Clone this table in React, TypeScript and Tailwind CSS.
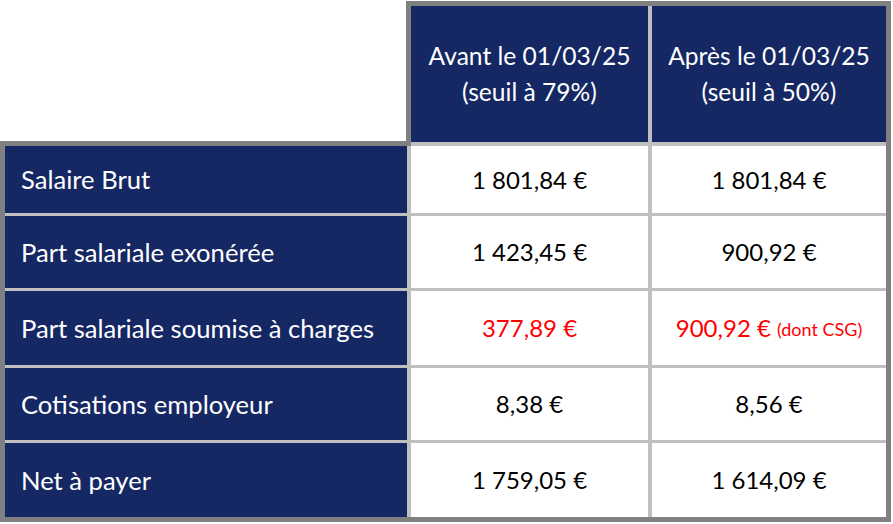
import React from "react";

const rows = [
  { label: "Salaire Brut", avant: "1 801,84 €", apres: "1 801,84 €" },
  { label: "Part salariale exonérée", avant: "1 423,45 €", apres: "900,92 €" },
  { label: "Part salariale soumise à charges", avant: "377,89 €", apres: "900,92 €", red: true, note: "(dont CSG)" },
  { label: "Cotisations employeur", avant: "8,38 €", apres: "8,56 €" },
  { label: "Net à payer", avant: "1 759,05 €", apres: "1 614,09 €" },
];

export default function App() {
  return (
    <div className="w-[893px] h-[524px] bg-white pt-px" style={{ fontFamily: "Lato, 'Open Sans', sans-serif" }}>
      <div className="w-[891px]">
        {/* header */}
        <div className="flex">
          <div className="w-[406px] flex flex-col justify-end">
            <div className="h-[5px] bg-[#808080]" />
          </div>
          <div className="flex gap-[4px] border-[5px] border-b-0 border-[#808080] bg-[#bfbfbf] pb-[4px]">
            <div className="w-[237px] h-[136px] bg-[#152863] text-white text-[24.6px] leading-[36px] flex flex-col items-center justify-center">
              <span>Avant le 01/03/25</span>
              <span>(seuil à 79%)</span>
            </div>
            <div className="w-[234px] h-[136px] bg-[#152863] text-white text-[24.6px] leading-[36px] flex flex-col items-center justify-center">
              <span>Après le 01/03/25</span>
              <span>(seuil à 50%)</span>
            </div>
          </div>
        </div>

        {/* body */}
        <div className="grid grid-cols-[402px_237px_234px] grid-rows-[67px_72px_74px_72px_74px] gap-x-[4px] gap-y-[3px] border-[5px] border-t-0 border-[#808080] bg-[#bfbfbf]">
          {rows.map((r, i) => (
            <React.Fragment key={i}>
              <div className="bg-[#152863] text-white text-[25.6px] flex items-center pl-[16px]">{r.label}</div>
              <div className={`bg-white text-[24px] flex items-center justify-center ${r.red ? "text-[#ff0000]" : "text-black"}`}>{r.avant}</div>
              <div className={`bg-white text-[24px] flex items-center justify-center ${r.red ? "text-[#ff0000]" : "text-black"}`}>
                {r.apres}
                {r.note && <span className="text-[18px] ml-[6px] mt-[2px]">{r.note}</span>}
              </div>
            </React.Fragment>
          ))}
        </div>
      </div>
    </div>
  );
}
